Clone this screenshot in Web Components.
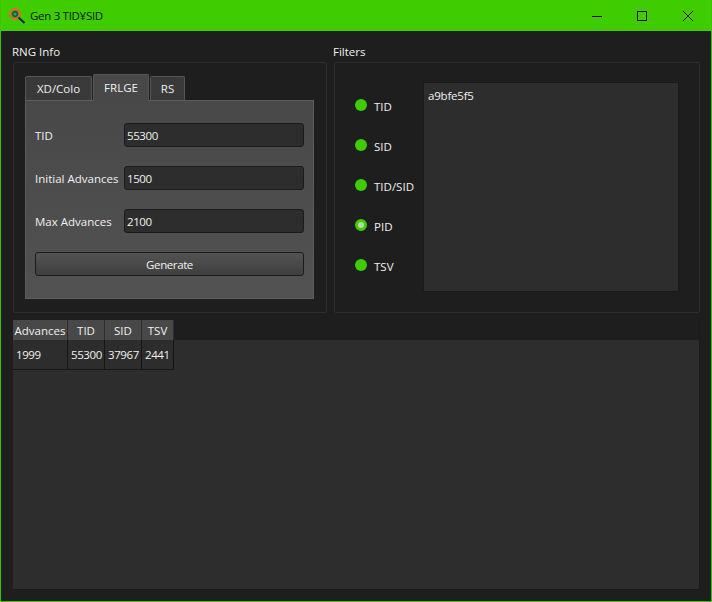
<!DOCTYPE html>
<html>
<head>
<meta charset="utf-8">
<title>Gen 3 TID¥SID</title>
<style>
    html, body { margin: 0; padding: 0; background: #1e1e1e; }
    body { font-family: "Open Sans", "Noto Sans", sans-serif; font-size: 11.5px; }
</style>
</head>
<body>
<app-window>
    <title-bar slot="title" text="Gen 3 TID¥SID"></title-bar>
    <group-box slot="top" label="RNG Info" style="width:314px">
        <tab-panel tabs="XD/Colo:67,FRLGE:56,RS:35" active="1">
            <form-row label="TID" value="55300"></form-row>
            <form-row label="Initial Advances" value="1500"></form-row>
            <form-row label="Max Advances" value="2100"></form-row>
            <push-button>Generate</push-button>
        </tab-panel>
    </group-box>
    <group-box slot="top" label="Filters" style="width:366px">
        <filter-panel></filter-panel>
    </group-box>
    <result-table slot="table"></result-table>
</app-window>

<script>
class AppWindow extends HTMLElement {
    constructor() {
        super();
        this.attachShadow({ mode: 'open' });
        this.shadowRoot.innerHTML = `
            <style>
                :host {
                    display: flex;
                    flex-direction: column;
                    width: 712px;
                    height: 602px;
                    box-sizing: border-box;
                    border: 1px solid #3fc400;
                    border-top: 0;
                    background: #1e1e1e;
                    overflow: hidden;
                }
                .top {
                    display: flex;
                    gap: 7px;
                    padding: 0 11px 0 12px;
                    height: 289px;
                }
                .table {
                    padding: 0 11px 0 12px;
                }
            </style>
            <slot name="title"></slot>
            <div class="top"><slot name="top"></slot></div>
            <div class="table"><slot name="table"></slot></div>
        `;
    }
}

class TitleBar extends HTMLElement {
    constructor() {
        super();
        this.attachShadow({ mode: 'open' });
        this.shadowRoot.innerHTML = `
            <style>
                :host {
                    display: flex;
                    align-items: center;
                    height: 31px;
                    margin: 0 -1px;
                    padding-right: 1px;
                    background: #3fcc00;
                    color: #0a1a00;
                    letter-spacing: -0.3px;
                    flex: none;
                }
                svg { flex: none; display: block; }
                .icon { margin-left: 9px; margin-right: 5px; margin-top: 1px; }
                .text { flex: 1; }
                .btn { width: 46px; height: 31px; display: flex; align-items: center; justify-content: center; }
                .min { margin-right: -1px; }
            </style>
            <svg class="icon" width="16" height="18" viewBox="0 0 16 18">
                <circle cx="6" cy="7" r="5" fill="#3fa818" stroke="#e8652c" stroke-width="2"/>
                <circle cx="6" cy="7" r="2.3" fill="#3f9a38" stroke="#14406a" stroke-width="1.2"/>
                <path d="M9.5 10.5 L15.5 16" stroke="#16245c" stroke-width="2"/>
            </svg>
            <span class="text">${this.getAttribute('text')}</span>
            <div class="btn min"><svg width="10" height="10"><path d="M0 5.5H10" stroke="#000" stroke-width="1"/></svg></div>
            <div class="btn"><svg width="10" height="10"><rect x=".5" y=".5" width="9" height="9" fill="none" stroke="#000"/></svg></div>
            <div class="btn"><svg width="10" height="10"><path d="M0 0L10 10M10 0L0 10" stroke="#000" stroke-width="1"/></svg></div>
        `;
    }
}

class GroupBox extends HTMLElement {
    constructor() {
        super();
        this.attachShadow({ mode: 'open' });
        this.shadowRoot.innerHTML = `
            <style>
                :host {
                    display: flex;
                    flex-direction: column;
                    flex: none;
                    color: #f0f0f0;
                }
                .label { height: 31px; line-height: 41px; box-sizing: border-box; margin-left: -1px; }
                .frame {
                    flex: 1;
                    box-sizing: border-box;
                    border: 1px solid #2e2e2e;
                    border-radius: 2px;
                    margin-bottom: 7px;
                    display: flex;
                }
            </style>
            <div class="label">${this.getAttribute('label')}</div>
            <div class="frame"><slot></slot></div>
        `;
    }
}

class TabPanel extends HTMLElement {
    constructor() {
        super();
        this.attachShadow({ mode: 'open' });
        const active = Number(this.getAttribute('active'));
        const tabs = this.getAttribute('tabs').split(',').map((t, i) => {
            const [name, width] = t.split(':');
            return `<div class="tab ${i === active ? 'on' : ''}" style="width:${width}px">${name}</div>`;
        }).join('');
        this.shadowRoot.innerHTML = `
            <style>
                :host {
                    display: flex;
                    flex-direction: column;
                    flex: 1;
                    padding: 11px 12px 13px 11px;
                    color: #f0f0f0;
                }
                .tabs { display: flex; align-items: flex-end; gap: 1px; height: 26px; flex: none; position: relative; z-index: 1; }
                .tab {
                    box-sizing: border-box;
                    height: 24px;
                    line-height: 24px;
                    text-align: center;
                    background: #3a3a3a;
                    border: 1px solid #555;
                    border-bottom: 0;
                    border-radius: 2px 2px 0 0;
                }
                .tab.on {
                    height: 27px;
                    line-height: 25px;
                    margin-bottom: -1px;
                    background: #484848;
                }
                .pane {
                    flex: 1;
                    box-sizing: border-box;
                    background: linear-gradient(#484848, #525252);
                    border: 1px solid #5c5c5c;
                    padding: 22px 9px 0 9px;
                    display: flex;
                    flex-direction: column;
                }
            </style>
            <div class="tabs">${tabs}</div>
            <div class="pane"><slot></slot></div>
        `;
    }
}

class FormRow extends HTMLElement {
    constructor() {
        super();
        this.attachShadow({ mode: 'open' });
        this.shadowRoot.innerHTML = `
            <style>
                :host {
                    display: flex;
                    align-items: center;
                    height: 24px;
                    margin-bottom: 19px;
                    color: #f0f0f0;
                }
                .label { width: 89px; flex: none; white-space: nowrap; }
                .input {
                    flex: 1;
                    box-sizing: border-box;
                    height: 24px;
                    line-height: 23px;
                    padding-left: 2px;
                    letter-spacing: -0.4px;
                    background: #2d2d2d;
                    border: 1px solid #1c1c1c;
                    border-radius: 3px;
                }
            </style>
            <div class="label">${this.getAttribute('label')}</div>
            <div class="input">${this.getAttribute('value')}</div>
        `;
    }
}

class PushButton extends HTMLElement {
    constructor() {
        super();
        this.attachShadow({ mode: 'open' });
        this.shadowRoot.innerHTML = `
            <style>
                :host {
                    display: block;
                    box-sizing: border-box;
                    height: 24px;
                    line-height: 24px;
                    text-align: center;
                    letter-spacing: -0.4px;
                    background: linear-gradient(#535353, #3f3f3f);
                    border: 1px solid #1c1c1c;
                    border-radius: 3px;
                    color: #f0f0f0;
                }
            </style>
            <slot></slot>
        `;
    }
}

class FilterPanel extends HTMLElement {
    constructor() {
        super();
        this.attachShadow({ mode: 'open' });
        const items = ['TID', 'SID', 'TID/SID', 'PID', 'TSV'].map(name =>
            `<div class="item"><span class="dot ${name === 'PID' ? 'sel' : ''}"></span><span class="name">${name}</span></div>`).join('');
        this.shadowRoot.innerHTML = `
            <style>
                :host {
                    display: flex;
                    flex: 1;
                    padding: 19px 20px 20px 20px;
                    color: #f0f0f0;
                }
                .list {
                    width: 68px;
                    flex: none;
                    display: flex;
                    flex-direction: column;
                    padding-top: 3px;
                }
                .item { display: flex; align-items: center; height: 40px; }
                .dot {
                    width: 12px;
                    height: 12px;
                    border-radius: 50%;
                    background: #3fcc00;
                    margin-right: 7px;
                    flex: none;
                    box-sizing: border-box;
                }
                .name { position: relative; top: 1px; }
                .dot.sel { background: #b4d8a8; border: 3px solid #3fcc00; }
                .memo {
                    flex: 1;
                    box-sizing: border-box;
                    background: #2d2d2d;
                    border: 1px solid #1a1a1a;
                    padding: 5px 4px;
                    letter-spacing: -0.2px;
                }
            </style>
            <div class="list">${items}</div>
            <div class="memo">a9bfe5f5</div>
        `;
    }
}

class ResultTable extends HTMLElement {
    constructor() {
        super();
        this.attachShadow({ mode: 'open' });
        const cols = [['Advances', 55], ['TID', 37], ['SID', 37], ['TSV', 32]];
        const row = ['1999', '55300', '37967', '2441'];
        const grid = cols.map(c => c[1] + 'px').join(' ');
        this.shadowRoot.innerHTML = `
            <style>
                :host {
                    display: block;
                    box-sizing: border-box;
                    height: 270px;
                    background: #2d2d2d;
                    border-right: 1px solid #1a1a1a;
                    border-bottom: 1px solid #1a1a1a;
                    color: #f0f0f0;
                }
                .head {
                    background: #1e1e1e;
                    height: 20px;
                }
                .row { display: grid; grid-template-columns: ${grid}; }
                .th {
                    box-sizing: border-box;
                    height: 20px;
                    line-height: 21px;
                    text-align: center;
                    background: #484848;
                    border-right: 1px solid #2e2e2e;
                    white-space: nowrap;
                }
                .td {
                    box-sizing: border-box;
                    height: 30px;
                    line-height: 29px;
                    padding-left: 3px;
                    letter-spacing: -0.4px;
                    border-right: 1px solid #151515;
                    border-bottom: 1px solid #151515;
                    white-space: nowrap;
                }
            </style>
            <div class="head"><div class="row">${cols.map(c => `<div class="th">${c[0]}</div>`).join('')}</div></div>
            <div class="row">${row.map(v => `<div class="td">${v}</div>`).join('')}</div>
        `;
    }
}

customElements.define('app-window', AppWindow);
customElements.define('title-bar', TitleBar);
customElements.define('group-box', GroupBox);
customElements.define('tab-panel', TabPanel);
customElements.define('form-row', FormRow);
customElements.define('push-button', PushButton);
customElements.define('filter-panel', FilterPanel);
customElements.define('result-table', ResultTable);
</script>
</body>
</html>
